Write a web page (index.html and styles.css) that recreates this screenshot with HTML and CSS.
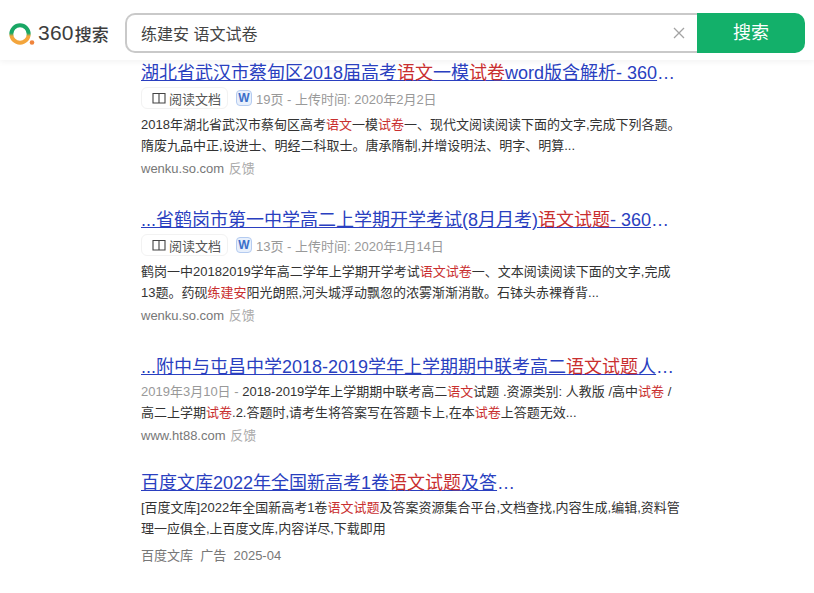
FILE: index.html
```html
<!DOCTYPE html>
<html>
<head>
    <meta charset="utf-8">
    <title>练建安 语文试卷 - 360搜索</title>
    <link rel="stylesheet" href="styles.css">
</head>
<body>
    <header class="top-bar">
        <a class="logo">
            <svg class="logo-mark" width="26" height="24" viewBox="0 0 26 24">
                <defs>
                    <linearGradient id="ring" x1="0" y1="0" x2="0" y2="1">
                        <stop offset="0.45" stop-color="#19a765"/>
                        <stop offset="0.62" stop-color="#f3a53c"/>
                    </linearGradient>
                </defs>
                <circle cx="11" cy="12" r="8.7" fill="none" stroke="url(#ring)" stroke-width="4"/>
                <circle cx="23" cy="20.5" r="2.3" fill="#f0843c"/>
            </svg>
            <span class="logo-num">360</span><span class="logo-text">搜索</span>
        </a>
        <form class="search-form">
            <div class="search-box">
                <span class="query">练建安 语文试卷</span>
                <svg class="clear" width="12" height="12" viewBox="0 0 12 12">
                    <path d="M1 1 L11 11 M11 1 L1 11" stroke="#a3a3a3" stroke-width="1.3"/>
                </svg>
            </div>
            <div class="search-btn">搜索</div>
        </form>
    </header>

    <main class="results">
        <section class="result">
            <h3 class="title"><a>湖北省武汉市蔡甸区2018届高考<em>语文</em>一模<em>试卷</em>word版含解析- 360</a>…</h3>
            <div class="doc-row">
                <span class="read-btn">
                    <svg width="14" height="12" viewBox="0 0 14 12"><path d="M1 1.5 H7 V11 H1 Z M7 1.5 H13 V11 H7 Z" fill="none" stroke="#444" stroke-width="1.1"/></svg>
                    阅读文档
                </span>
                <span class="word-icon">W</span>
                <span class="doc-info">19页 - 上传时间: 2020年2月2日</span>
            </div>
            <p class="snippet">2018年湖北省武汉市蔡甸区高考<em>语文</em>一模<em>试卷</em>一、现代文阅读阅读下面的文字,完成下列各题。<br>隋废九品中正,设进士、明经二科取士。唐承隋制,并增设明法、明字、明算...</p>
            <div class="source">wenku.so.com <span class="feedback">反馈</span></div>
        </section>

        <section class="result">
            <h3 class="title"><a>...省鹤岗市第一中学高二上学期开学考试(8月月考)<em>语文试题</em>- 360</a>…</h3>
            <div class="doc-row">
                <span class="read-btn">
                    <svg width="14" height="12" viewBox="0 0 14 12"><path d="M1 1.5 H7 V11 H1 Z M7 1.5 H13 V11 H7 Z" fill="none" stroke="#444" stroke-width="1.1"/></svg>
                    阅读文档
                </span>
                <span class="word-icon">W</span>
                <span class="doc-info">13页 - 上传时间: 2020年1月14日</span>
            </div>
            <p class="snippet">鹤岗一中20182019学年高二学年上学期开学考试<em>语文试卷</em>一、文本阅读阅读下面的文字,完成<br>13题。药砚<em>练建安</em>阳光朗照,河头城浮动飘忽的浓雾渐渐消散。石钵头赤裸脊背...</p>
            <div class="source">wenku.so.com <span class="feedback">反馈</span></div>
        </section>

        <section class="result no-doc">
            <h3 class="title"><a>...附中与屯昌中学2018-2019学年上学期期中联考高二<em>语文试题</em>人</a>…</h3>
            <p class="snippet"><span class="date">2019年3月10日 - </span>2018-2019学年上学期期中联考高二<em>语文</em>试题 .资源类别: 人教版 /高中<em>试卷</em> /<br>高二上学期<em>试卷</em>.2.答题时,请考生将答案写在答题卡上,在本<em>试卷</em>上答题无效...</p>
            <div class="source">www.ht88.com <span class="feedback">反馈</span></div>
        </section>

        <section class="result no-doc">
            <h3 class="title"><a>百度文库2022年全国新高考1卷<em>语文试题</em>及答</a>…</h3>
            <p class="snippet">[百度文库]2022年全国新高考1卷<em>语文试题</em>及答案资源集合平台,文档查找,内容生成,编辑,资料管<br>理一应俱全,上百度文库,内容详尽,下载即用</p>
            <div class="source ad">百度文库&nbsp; 广告&nbsp; 2025-04</div>
        </section>
    </main>
</body>
</html>
```

FILE: styles.css
```css
html, body { margin: 0; padding: 0; height: 593px; overflow: hidden; }
body { font-family: Arial, "Liberation Sans", "Noto Sans CJK SC", sans-serif; background-color: #fff; color: #333; }
em { font-style: normal; color: #c92f2f; }

.top-bar { height: 60px; display: flex; align-items: flex-start; box-shadow: 0 2px 6px rgba(0,0,0,0.05); }
.logo { display: flex; align-items: center; width: 125px; height: 40px; margin-top: 13px; padding-left: 9px; box-sizing: border-box; white-space: nowrap; color: #3d3d3d; }
.logo-mark { flex: none; margin-top: 1px; }
.logo-num { font-size: 21px; margin-left: 3px; letter-spacing: 0.2px; }
.logo-text { font-size: 17px; font-weight: 500; margin-left: 1px; }
.search-form { display: flex; margin-top: 13px; }
.search-box { width: 572px; height: 40px; box-sizing: border-box; border: 2px solid #c9c9c9; border-right: 0; border-radius: 10px 0 0 10px; display: flex; align-items: center; justify-content: space-between; padding: 0 12px 0 14px; }
.query { font-size: 16px; color: #444; }
.search-btn { width: 108px; height: 40px; line-height: 41px; text-align: center; background-color: #13b06a; color: #fff; font-size: 18px; border-radius: 0 10px 10px 0; }

.results { padding-left: 141px; width: 545px; }
.result { height: 147px; }
.result.no-doc { height: 116px; }
.title { margin: 0; font-size: 18px; font-weight: normal; line-height: 26px; color: #2a3fc0; white-space: nowrap; }
.title a { color: #2a3fc0; text-decoration: underline; }
.title em { color: #c92f2f; }
.doc-row { display: flex; align-items: center; height: 24px; font-size: 13px; color: #999; }
.read-btn { display: flex; align-items: center; gap: 3px; width: 87px; height: 22px; box-sizing: border-box; padding-left: 10px; border: 1px solid #f2f2f2; border-radius: 6px; color: #555; font-size: 13px; }
.word-icon { width: 16px; height: 16px; margin-left: 8px; box-sizing: border-box; border: 1px solid #b4cbf0; border-radius: 4px; background-color: #e8f0fc; color: #3b6fc9; font-size: 12px; font-weight: bold; line-height: 14px; text-align: center; }
.doc-info { margin-left: 4px; }
.snippet { margin: 4px 0 0; font-size: 13px; line-height: 21px; color: #333; white-space: nowrap; }
.no-doc .snippet { margin-top: 1px; }
.date { color: #999; }
.source { margin-top: 3px; font-size: 13px; line-height: 20px; color: #777; }
.source.ad { margin-top: 7px; }
.feedback { color: #aaa; margin-left: 1px; }
```
